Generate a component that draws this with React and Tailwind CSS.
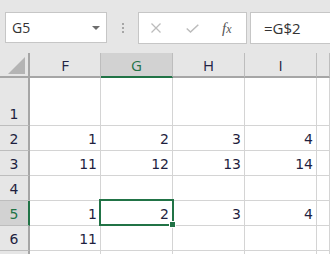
import React from "react";

const NUM = "font-['DejaVu_Sans',sans-serif] text-[14px] leading-none text-[#1f1f3f]";

function RowHeader({ label, selected }) {
  return (
    <div
      className={`w-[30px] shrink-0 flex items-end justify-center pb-[4px] border-r-2 border-b ${
        selected
          ? "bg-[#d2d2d2] border-r-[#217346] border-b-[#bdbdbd] text-[#217346]"
          : "bg-[#e6e6e6] border-r-[#a6a6a6] border-b-[#bdbdbd] text-[#1f1f3f]"
      } font-['DejaVu_Sans',sans-serif] text-[14px] leading-none`}
    >
      {label}
    </div>
  );
}

function Cell({ w, value, children, last }) {
  return (
    <div
      className={`${w} ${last ? "flex-1" : "shrink-0"} relative flex items-end justify-end pr-[3px] pb-[4px] border-r border-b border-[#d4d4d4] ${NUM}`}
    >
      {value}
      {children}
    </div>
  );
}

const widths = ["w-[71px]", "w-[72px]", "w-[72px]", "w-[72px]", "w-[14px]"];

function DataRow({ label, values, h, selected }) {
  return (
    <div className={`flex ${h}`}>
      <RowHeader label={label} selected={selected} />
      {widths.map((w, i) => (
        <Cell key={i} w={w} value={values[i]} last={i === 4}>
          {selected && i === 1 ? (
            <>
              <div className="absolute left-[-2px] top-[-2px] w-[75px] h-[27px] border-2 border-[#217346] z-10 pointer-events-none" />
              <div className="absolute left-[68px] top-[20px] w-[7px] h-[7px] bg-[#217346] border border-white z-20" />
            </>
          ) : null}
        </Cell>
      ))}
    </div>
  );
}

export default function App() {
  const cols = ["F", "G", "H", "I", ""];
  return (
    <div className="w-[330px] h-[254px] overflow-hidden bg-white font-['Open_Sans',sans-serif]">
      {/* formula bar */}
      <div className="h-[53px] bg-[#e6e6e6] flex items-start pt-[12px]">
        <div className="ml-[5px] w-[102px] h-[31px] bg-white border border-[#c6c6c6] flex items-center justify-between pl-[6px] pr-[6px]">
          <span className="text-[14px] text-[#333333] leading-none">G5</span>
          <svg width="8" height="4" viewBox="0 0 8 4">
            <path d="M0 0 H8 L4 4 Z" fill="#6d6d6d" />
          </svg>
        </div>
        <div className="w-[31px] h-[31px] flex flex-col items-center justify-center gap-[2px]">
          <div className="w-[2px] h-[2px] bg-[#a6a6a6]" />
          <div className="w-[2px] h-[2px] bg-[#a6a6a6]" />
          <div className="w-[2px] h-[2px] bg-[#a6a6a6]" />
        </div>
        <div className="w-[109px] h-[32px] bg-white border border-[#c6c6c6] flex items-center">
          <svg className="ml-[12px]" width="10" height="10" viewBox="0 0 10 10">
            <path d="M0.5 0.5 L9.5 9.5 M9.5 0.5 L0.5 9.5" stroke="#bcbcbc" strokeWidth="1.3" />
          </svg>
          <svg className="ml-[25px]" width="13" height="9" viewBox="0 0 13 9">
            <path d="M0.7 4.5 L4.5 8 L12.3 0.7" stroke="#bcbcbc" strokeWidth="1.5" fill="none" />
          </svg>
          <span className="ml-[23px] font-['Liberation_Serif',serif] italic text-[15px] text-[#555555] leading-none">
            f<span className="text-[12px]">x</span>
          </span>
        </div>
        <div className="ml-[3px] flex-1 h-[32px] bg-white border-y border-l border-[#c6c6c6] flex items-center pl-[13px]">
          <span className="text-[15px] text-[#333333] leading-none">=G$2</span>
        </div>
      </div>

      {/* column headers */}
      <div className="flex h-[25px] bg-[#e6e6e6]">
        <div className="w-[30px] shrink-0 border-r-2 border-b-2 border-[#a6a6a6] relative">
          <svg className="absolute left-[8px] top-[4px]" width="17" height="17" viewBox="0 0 17 17">
            <path d="M17 0 V17 H0 Z" fill="#b4b4b4" />
          </svg>
        </div>
        {cols.map((c, i) => (
          <div
            key={i}
            className={`${widths[i]} ${i === 4 ? "flex-1" : "shrink-0"} flex items-center justify-center border-b-2 border-r text-[15px] leading-none pt-[1px] ${
              i === 1
                ? "bg-[#d2d2d2] border-b-[#217346] border-r-[#bdbdbd] text-[#217346]"
                : "border-b-[#a6a6a6] border-r-[#bdbdbd] text-[#222244]"
            }`}
          >
            {c}
          </div>
        ))}
      </div>

      <DataRow label="1" values={["", "", "", "", ""]} h="h-[48px]" />
      <DataRow label="2" values={["1", "2", "3", "4", ""]} h="h-[25px]" />
      <DataRow label="3" values={["11", "12", "13", "14", ""]} h="h-[25px]" />
      <DataRow label="4" values={["", "", "", "", ""]} h="h-[25px]" />
      <DataRow label="5" values={["1", "2", "3", "4", ""]} h="h-[25px]" selected />
      <DataRow label="6" values={["11", "", "", "", ""]} h="h-[25px]" />
      <DataRow label="" values={["", "", "", "", ""]} h="h-[25px]" />
    </div>
  );
}
